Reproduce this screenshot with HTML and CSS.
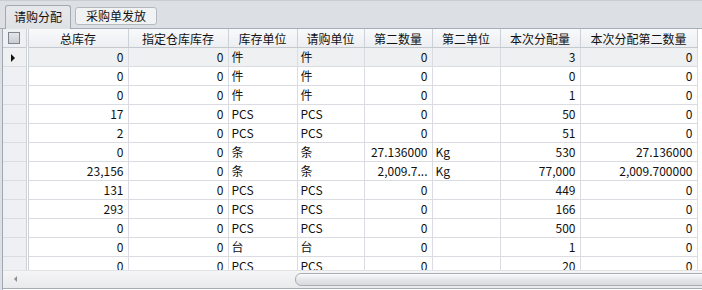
FILE: index.html
```html
<!DOCTYPE html>
<html lang="zh-CN">
<head>
  <meta charset="UTF-8" />
  <title>请购分配</title>
  <link rel="stylesheet" href="styles.css">
</head>
<body>

  <div class="tab-bar">
    <div class="tab active">请购分配</div>
    <div class="tab">采购单发放</div>
  </div>

  <div class="grid-frame">
    <div class="grid-view">
      <table class="grid">
        <colgroup>
          <col style="width:24px"><col style="width:101px"><col style="width:100px"><col style="width:69px">
          <col style="width:67px"><col style="width:68px"><col style="width:68px"><col style="width:80px"><col style="width:117px">
        </colgroup>
        <thead>
          <tr>
            <th class="row-head"><span class="check"></span></th>
            <th>总库存</th>
            <th>指定仓库库存</th>
            <th>库存单位</th>
            <th>请购单位</th>
            <th>第二数量</th>
            <th>第二单位</th>
            <th>本次分配量</th>
            <th>本次分配第二数量</th>
          </tr>
        </thead>
        <tbody id="rows"></tbody>
      </table>
    </div>
    <div class="hscroll">
      <span class="arrow-left"></span>
      <span class="thumb"></span>
    </div>
  </div>

  <script>
    const data = [
      ['0', '0', '件', '件', '0', '', '3', '0'],
      ['0', '0', '件', '件', '0', '', '0', '0'],
      ['0', '0', '件', '件', '0', '', '1', '0'],
      ['17', '0', 'PCS', 'PCS', '0', '', '50', '0'],
      ['2', '0', 'PCS', 'PCS', '0', '', '51', '0'],
      ['0', '0', '条', '条', '27.136000', 'Kg', '530', '27.136000'],
      ['23,156', '0', '条', '条', '2,009.7...', 'Kg', '77,000', '2,009.700000'],
      ['131', '0', 'PCS', 'PCS', '0', '', '449', '0'],
      ['293', '0', 'PCS', 'PCS', '0', '', '166', '0'],
      ['0', '0', 'PCS', 'PCS', '0', '', '500', '0'],
      ['0', '0', '台', '台', '0', '', '1', '0'],
      ['0', '0', 'PCS', 'PCS', '0', '', '20', '0']
    ];
    const textCols = [2, 3, 5];

    const body = document.getElementById('rows');
    data.forEach((row, i) => {
      const tr = document.createElement('tr');
      if (i === 0) tr.className = 'current';
      let html = '<td class="row-head">' + (i === 0 ? '<span class="pointer"></span>' : '') + '</td>';
      row.forEach((val, c) => {
        html += '<td class="' + (textCols.includes(c) ? 'txt' : 'num') + '">' + val + '</td>';
      });
      tr.innerHTML = html;
      body.appendChild(tr);
    });
  </script>

</body>
</html>
```

FILE: styles.css
```css
body {
  margin: 0;
  width: 702px;
  height: 290px;
  overflow: hidden;
  background-color: #dcdfe3;
  font-family: "Noto Sans CJK SC", "DejaVu Sans", sans-serif;
  font-size: 12px;
  color: #111;
}
.tab-bar {
  height: 28px;
  display: flex;
  align-items: flex-end;
  gap: 4px;
  padding-left: 5px;
  border-top: 1px solid #c9cdd3;
  border-bottom: 1px solid #a7adb6;
  box-sizing: border-box;
  height: 29px;
}
.tab {
  box-sizing: border-box;
  height: 18px;
  margin-bottom: 3px;
  padding: 0 10px;
  line-height: 16px;
  background: #f1f2f4;
  border: 1px solid #b4b9c0;
  border-radius: 3px;
}
.tab.active {
  height: 24px;
  margin-bottom: -1px;
  padding: 0 8px;
  line-height: 22px;
  background: linear-gradient(#e6e8eb, #dfe2e5);
  border-color: #a3a9b2;
  border-bottom: none;
  border-radius: 3px 3px 0 0;
}
.grid-frame {
  margin-left: 2px;
  height: 261px;
  border-left: 1px solid #a3a9b2;
  background: #fff;
  display: flex;
  flex-direction: column;
}
.grid-view {
  height: 241px;
  overflow: hidden;
}
.grid {
  table-layout: fixed;
  border-collapse: collapse;
  width: 694px;
}
.grid th {
  height: 18px;
  padding: 0;
  font-weight: normal;
  text-align: center;
  white-space: nowrap;
  background: linear-gradient(#f8f9fb, #eceef2);
  border-right: 1px solid #cdd1d8;
  border-bottom: 1px solid #c4c8cf;
}
.grid td {
  height: 18px;
  padding: 0 4px 0 3px;
  line-height: 18px;
  white-space: nowrap;
  overflow: hidden;
  border-right: 1px solid #dadce1;
  border-bottom: 1px solid #dadce1;
}
.grid td.num {
  text-align: right;
}
.grid td.txt {
  text-align: left;
}
.grid .row-head {
  background: #eff0f3;
  border-right: 3px double #cdd1d8;
  padding: 0;
  position: relative;
}
.grid tr.current td {
  background: #eef0f2;
}
.check {
  display: block;
  width: 10px;
  height: 10px;
  margin: 0 auto;
  border: 1px solid #80868f;
  background: linear-gradient(#e4e6e9, #c9ccd1);
}
.pointer {
  position: absolute;
  left: 8px;
  top: 6px;
  width: 0;
  height: 0;
  border-top: 4px solid transparent;
  border-bottom: 4px solid transparent;
  border-left: 4px solid #111;
}
.hscroll {
  height: 17px;
  position: relative;
  background: linear-gradient(#f5f5f6, #e9eaec);
  border-top: 1px solid #e2e3e6;
  border-bottom: 1px solid #a7adb6;
}
.arrow-left {
  position: absolute;
  left: 11px;
  top: 5px;
  width: 0;
  height: 0;
  border-top: 3px solid transparent;
  border-bottom: 3px solid transparent;
  border-right: 3px solid #8c9096;
}
.thumb {
  position: absolute;
  left: 292px;
  right: -8px;
  top: 2px;
  height: 11px;
  border: 1px solid #a9adb3;
  border-radius: 6px;
  background: linear-gradient(#fbfbfc, #e4e5e8 55%, #d8dade);
}
```
